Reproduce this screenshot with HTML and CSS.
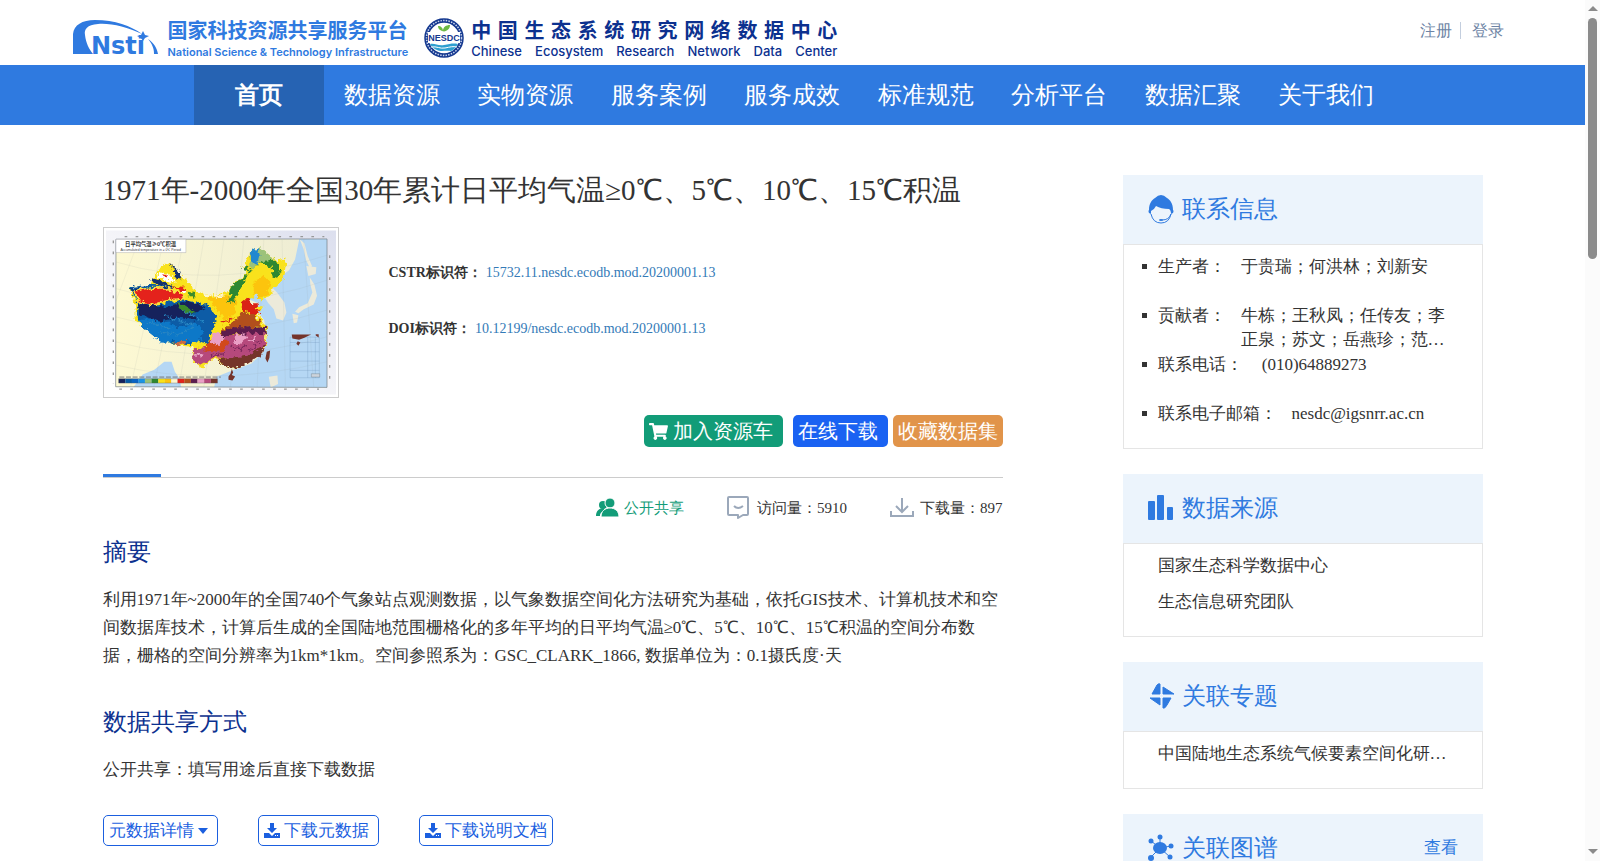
FILE: index.html
```html
<!DOCTYPE html>
<html>
<head>
    <meta charset="UTF-8">
    <meta name="viewport" content="width=device-width, initial-scale=1.0">
    <title>1971年-2000年全国30年累计日平均气温≥0℃、5℃、10℃、15℃积温</title>
    <link rel="stylesheet" href="styles.css">
</head>
<body>
    <div class="page">
        <header class="top">
            <a class="logo-nsti" href="#">
                <svg class="nsti-mark" viewBox="0 0 86 42" aria-hidden="true">
                    <path fill="#2f7ae0" d="M0 34V14C1 5 9 0 22 0c20 0 36 6 47 14-15-7-31-11-44-10C14 5 11 9 12 15c1 8 4 14 8 19z"/>
                    <path fill="#2f7ae0" d="M70 11l2 4 4 1-4 2-2 3-2-3-4-2 4-1z"/>
                    <path fill="#2f7ae0" d="M75 19c6 4 9 9 10 15h-4c0-6-2-10-6-15z"/>
                    <text x="18" y="34" class="nsti-text">Nsti</text>
                </svg>
                <span class="logo-words">
                    <b>国家科技资源共享服务平台</b>
                    <small>National Science &amp; Technology Infrastructure</small>
                </span>
            </a>
            <a class="logo-nesdc" href="#">
                <svg class="nesdc-mark" viewBox="0 0 40 40" aria-hidden="true">
                    <circle cx="20" cy="20" r="17.500" fill="#fff" stroke="#14388f" stroke-width="4.500"/>
                    <circle cx="20" cy="20" r="17.500" fill="none" stroke="#c7d2ec" stroke-width="1.500" stroke-dasharray="1.500 1.200"/>
                    <path fill="#6cb944" d="M18 13c-3-1-4-3-4-5 3 0 5 2 5 5 0-4 3-6 7-6 0 4-3 6-6 6.500z"/>
                    <path fill="#2f9fd0" d="M6 26c5-1 8 2 14 1s9-2 14-1c-2 3-4 6-7 7-5-1-10 1-14-1-3-1-6-4-7-6z"/>
                    <path fill="none" stroke="#fff" d="M7 29c6-1 9 2 14 1s8-2 12-1"/>
                    <path fill="#fff" d="M4 14h32v11H4z"/>
                    <text x="20" y="23" text-anchor="middle" class="nesdc-text">NESDC</text>
                </svg>
                <span class="logo-words spread">
                    <b>中国生态系统研究网络数据中心</b>
                    <small>Chinese Ecosystem Research Network Data Center</small>
                </span>
            </a>
            <div class="login">
                <a href="#">注册</a>
                <a href="#">登录</a>
            </div>
        </header>

        <nav class="nav">
            <ul>
                <li class="active"><a href="#">首页</a></li>
                <li><a href="#">数据资源</a></li>
                <li><a href="#">实物资源</a></li>
                <li><a href="#">服务案例</a></li>
                <li><a href="#">服务成效</a></li>
                <li><a href="#">标准规范</a></li>
                <li><a href="#">分析平台</a></li>
                <li><a href="#">数据汇聚</a></li>
                <li><a href="#">关于我们</a></li>
            </ul>
        </nav>

        <div class="container">
            <main>
                <h1>1971年-2000年全国30年累计日平均气温≥0℃、5℃、10℃、15℃积温</h1>
                <div class="summary">
                    <svg class="thumb" viewBox="16 16 691 492" role="img" aria-label="日平均气温≥0℃积温">
                        <defs>
                            <linearGradient id="paper" x1="0" x2="1" y1="1" y2="0">
                                <stop offset="0" stop-color="#fff"/>
                                <stop offset=".5" stop-color="#f4f4f8"/>
                                <stop offset="1" stop-color="#dcdfee"/>
                            </linearGradient>
                            <linearGradient id="land" x1="0" x2="1">
                                <stop offset="0" stop-color="#fdf9d3"/>
                                <stop offset="1" stop-color="#ecebd4"/>
                            </linearGradient>
                            <filter id="rough" x="-5%" y="-5%" width="110%" height="110%">
                                <feTurbulence type="fractalNoise" baseFrequency=".08" numOctaves="3" seed="4"/>
                                <feDisplacementMap in="SourceGraphic" scale="22" xChannelSelector="R" yChannelSelector="G"/>
                            </filter>
                            <clipPath id="frame"><path d="M46 42l634-1v446l-635-2z"/></clipPath>
                        </defs>
                        <path fill="url(#paper)" d="M16 16h691v492H16z"/>
                        <g clip-path="url(#frame)">
                            <path fill="url(#land)" d="M40 40h645v450H40z"/>
                            <path fill="#b5d7f4" d="M597 40h90v450H340l8-35 45-18 60-22 36-35 12-50-10-45-22-32 6-18-38-16 3-22 35-6 30-12 28-20 33-24 18-32z"/>
                            <path fill="#b5d7f4" d="M96 490l30-42 35-14 30-24h22l10 30 14 20 6 30z"/>
                            <path fill="#eceada" d="M482 201l28-19 20 20 22 30 6 30-10 24-20-6-8-28-16-18zM598 42l14 12 10 38 13 30-6 8-12-26-8-34zM618 122l30 4-2 20-22 6zM628 156l14 22 8 34-10 26-30 14-16 12-10-4 12-14 26-12 14-32-6-24zM576 266l18 4-4 22-10 2zM505 455l26-4 2 26-22 10z"/>
                            <g fill="none" stroke="#8d9a97" stroke-opacity=".3">
                                <path d="M45 230l70-187M90 485L190 43M160 485L250 43M235 485L310 43M310 485L370 43M390 485L430 43M470 485L490 43M555 485L545 43M640 485L610 43"/>
                                <path d="M45 110q300 90 635-20M45 190q300 90 635-25M45 275q300 85 635-20M45 350q300 80 635-15M45 420q300 70 635-10"/>
                            </g>
                            <g filter="url(#rough)">
                                <path fill="#f9e21a" d="M85 187l65-7 10-25 22-34 28-6 30 35 28 30 22 20 50 10 45-10 15-30 25-10 15-30h-15l25-50 25-13 25 18 30 20 30-5-10 60-25 25-25 35-20 5-10-20-30 20-10 10 60 10-20 15 8 20 22 30-3 50-27 35-30 20-40 15-35-10-15-20-20 5-25 25-30-20 5-45-40-3-60-17-40-30-35-25v-50z"/>
                                <path fill="#075ba6" d="M86 186l64-7 60 4 20 6-70-4-60 10 8 34 50 12 90-18 80 18 22 40-20 44-8 30-40-8-12 10-58-2-40-20-44-30-20-38 5-30z"/>
                                <path fill="#0d78c8" d="M108 285l60-5 60 26 60-10 20 20-12 40-40-8-70 5-50-38z"/>
                                <path fill="#15215b" d="M112 236l83 8 70-16 52 18-40 20 10 20-60-10-50 14-60-24z"/>
                                <path fill="#16306e" d="M152 160l24 4 40 20-10 6-52-20zM210 116l26 22 6 22-16-4zM90 190l30-4-20 18z"/>
                                <path fill="none" stroke="#2a86c2" stroke-width="4" d="M140 290l70 20M190 270l90 30M240 250l70 40M170 320l60 6M230 330l50-24"/>
                                <path fill="#fff" stroke="#f9e21a" stroke-width="3" d="M165 152l22-12 30 14 12 20-34-6zM238 186l28 10-18 12z"/>
                                <path fill="#e4231b" stroke="#fbe04b" stroke-width="4" d="M100 198l40-8 50-2 60 22-6 10-40 4-50 14-36-8z"/>
                                <path fill="#e4231b" d="M212 184l40 4 10 10-30-4zM188 148h10v8h-10z"/>
                                <path fill="#3c8c2c" d="M226 232l30 10 30 20-16 4-34-16zM262 200l22 4-4 14-18-6z"/>
                                <path fill="#fcc40e" d="M320 218l60-8 28 14-4 44-30 16-26-30zM460 170l30-20 20 20-10 40-22 8-18-14z"/>
                                <path fill="#fdf5cf" d="M300 202l40 8-18 10zM340 208l34 4-20 8z"/>
                                <path fill="#2f8730" d="M384 206l14-32 30-14 34-42 30-14 34 0 18 32-12 24-16-6-2-30-40-10-30 30-18 36-14 26-18 30-14-4 14-26zM424 130l18-14 6 20z"/>
                                <path fill="#9cc27a" d="M446 120l12-40 18-14 24 18 22 18-20 4-30 8-16 20z"/>
                                <path fill="#2488d0" d="M448 82l20-14 10 16-8 34-16-6z"/>
                                <path fill="#f9e21a" d="M532 112l28-10-10 30-16 4z"/>
                                <path fill="#da2118" d="M424 232l16-14 14 16 20 0-6 14 8 18-18 8-14-14-20-4zM360 292l40-16-4 8-36 14z"/>
                                <path fill="#b2501b" d="M400 290l24-32 40 10 22 34-38 4-50 10-60 30 30-34z"/>
                                <path fill="#5c1d4e" d="M398 306l50 0 48-4 4 26-40 2-52-6-52 18 8-22z"/>
                                <path fill="#b6497c" d="M388 330l60-6 50 4-6 40-50 30-60 4-40-6-46 26-22-18 8-34 40-6 20-20z"/>
                                <path fill="#d1491a" d="M322 352l40-18 22 18-18 26-34 4-24-8z"/>
                                <path fill="#eaa0c6" d="M332 324l20-6 20 22-18 20-20-6zM404 330l28-6 8 14-20 18-20-4zM444 342l24-8-10 20z"/>
                                <path fill="#e7a3c5" d="M282 384l24 0-8 14z"/>
                                <path fill="none" stroke="#7d2a5c" stroke-width="4" d="M390 366l30 8 20-14M440 380l30-20M330 392l40-6M460 344l20 6"/>
                                <path fill="#75342b" d="M352 402l40-4 50-6 30-20 22-12-12 30-40 26-42 14-34-10z"/>
                                <path fill="#c96a45" d="M224 352l36-8-10 14-20 6z"/>
                            </g>
                            <path fill="#75342b" d="M394 432l4 10-4 8 10 4-8 12-12-2 0-10 6-8zM499 380l10-4-2 22-6 14-6-12z"/>
                            <g fill="none" stroke="#5f86ad" stroke-opacity=".7">
                                <path d="M569 336h88v122h-88zM569 352h88M569 380h88M569 408h88M569 436h88M622 336v122M645 336v122"/>
                            </g>
                            <path fill="#75342b" d="M574 328h58l-20 10-16 6-20-4zM646 327h9v10l-9-6zM592 348l8 4-6 10-6-6z"/>
                            <path fill="#ccd4dc" stroke="#5b6670" d="M633 446h25v10h-25z"/>
                        </g>
                        <path fill="none" stroke="#6f7a80" stroke-width="2" d="M46 42l634-1v446l-635-2z"/>
                        <path fill="#fff" stroke="#889" d="M46 42h210v40H46z"/>
                        <text x="150" y="62" text-anchor="middle" class="map-title">日平均气温≥0℃积温</text>
                        <text x="150" y="77" text-anchor="middle" class="map-sub">Accumulated temperature in ≥ 0℃ Period</text>
                        <g fill="none" stroke="#999" stroke-width="4" stroke-dasharray="8 25">
                            <path d="M72 34h600M56 492h600M38 46v430M688 90v390"/>
                        </g>
                        <path stroke="#777" stroke-width="3" stroke-dasharray="15 5" d="M56 456h305"/>
                        <path fill="#15215b" d="M54 461h20v13H54z"/>
                        <path fill="#075ba6" d="M74 461h20v13H74z"/>
                        <path fill="#0a63c4" d="M94 461h20v13H94z"/>
                        <path fill="#1b94e4" d="M114 461h19v13h-19z"/>
                        <path fill="#9cc27a" d="M133 461h20v13h-20z"/>
                        <path fill="#2f8730" d="M153 461h20v13h-20z"/>
                        <path fill="#f9e21a" d="M173 461h20v13h-20z"/>
                        <path fill="#fcc40e" d="M193 461h19v13h-19z"/>
                        <path fill="#fdf5cf" d="M212 461h19v13h-19z"/>
                        <path fill="#e4231b" d="M231 461h20v13h-20z"/>
                        <path fill="#b2501b" d="M251 461h20v13h-20z"/>
                        <path fill="#5c1d4e" d="M271 461h20v13h-20z"/>
                        <path fill="#eaa0c6" d="M291 461h20v13h-20z"/>
                        <path fill="#b6497c" d="M311 461h20v13h-20z"/>
                        <path fill="#75342b" d="M331 461h20v13h-20z"/>
                        <path fill="none" stroke="#555" d="M54 461h297v13H54z"/>
                    </svg>
                    <dl class="ids">
                        <div><dt>CSTR标识符：</dt><dd><a href="#">15732.11.nesdc.ecodb.mod.20200001.13</a></dd></div>
                        <div><dt>DOI标识符：</dt><dd><a href="#">10.12199/nesdc.ecodb.mod.20200001.13</a></dd></div>
                    </dl>
                </div>

                <div class="actions">
                    <button class="btn cart" type="button">
                        <svg viewBox="0 0 576 512" aria-hidden="true"><path fill="currentColor" d="M528 301l47-208c4-15-8-29-23-29H159l-9-45C148 8 138 0 127 0H24C11 0 0 11 0 24v16c0 13 11 24 24 24h70l70 343c-17 10-28 28-28 49 0 31 25 56 56 56s56-25 56-56c0-16-6-30-17-40h210c-11 10-17 24-17 40 0 31 25 56 56 56s56-25 56-56c0-22-13-41-32-50l6-25c3-15-8-29-24-29H218l-6-32h293c11 0 21-8 23-19z"/></svg>
                        加入资源车
                    </button>
                    <button class="btn online" type="button">在线下载</button>
                    <button class="btn collect" type="button">收藏数据集</button>
                </div>

                <div class="stats">
                    <span class="share">
                        <svg viewBox="0 0 24 20" width="24" height="20" aria-hidden="true">
                            <g fill="currentColor">
                                <circle cx="7" cy="7" r="4"/>
                                <path d="M0 18c0-5 3-8 8-8 1 2 0 3-2 4-2 1-2 3-2 4z"/>
                                <circle cx="14" cy="5" r="5" stroke="#fff"/>
                                <path d="M5 19c0-6 4-9 9-9s9 3 9 9z" stroke="#fff"/>
                            </g>
                        </svg>
                        公开共享
                    </span>
                    <span>
                        <svg viewBox="0 0 24 24" width="24" height="24" aria-hidden="true">
                            <path fill="none" stroke="#9ba8ba" stroke-width="2" stroke-linejoin="round" d="M2 1h18q1 0 1 1v16q0 1-1 1h-4l-5 3v-3H2q-1 0-1-1V2q0-1 1-1zM7 10q4 4 9 0"/>
                        </svg>
                        访问量：5910
                    </span>
                    <span>
                        <svg viewBox="0 0 24 20" width="24" height="20" aria-hidden="true">
                            <path fill="none" stroke="#9ba8ba" stroke-width="2" d="M12 0v13M6 8l6 6 6-6M1 13v5h22v-5"/>
                        </svg>
                        下载量：897
                    </span>
                </div>

                <h2>摘要</h2>
                <p>利用1971年~2000年的全国740个气象站点观测数据，以气象数据空间化方法研究为基础，依托GIS技术、计算机技术和空间数据库技术，计算后生成的全国陆地范围栅格化的多年平均的日平均气温≥0℃、5℃、10℃、15℃积温的空间分布数据，栅格的空间分辨率为1km*1km。空间参照系为：GSC_CLARK_1866, 数据单位为：0.1摄氏度·天</p>
                <h2>数据共享方式</h2>
                <p>公开共享：填写用途后直接下载数据</p>

                <div class="links">
                    <button type="button">元数据详情
                        <svg viewBox="0 0 10 16" width="10" height="16" aria-hidden="true"><path fill="currentColor" d="M0 5h10l-5 6z"/></svg>
                    </button>
                    <button type="button" class="wide">
                        <svg viewBox="0 0 16 16" width="16" height="16" aria-hidden="true"><path fill="currentColor" fill-rule="evenodd" d="M6 0h4v5h3l-5 5-5-5h3zM0 10h5l3 3 3-3h5v5H0zM11 12v1h1v-1zM13 12v1h1v-1z"/></svg>
                        下载元数据
                    </button>
                    <button type="button">
                        <svg viewBox="0 0 16 16" width="16" height="16" aria-hidden="true"><path fill="currentColor" fill-rule="evenodd" d="M6 0h4v5h3l-5 5-5-5h3zM0 10h5l3 3 3-3h5v5H0zM11 12v1h1v-1zM13 12v1h1v-1z"/></svg>
                        下载说明文档
                    </button>
                </div>
            </main>

            <aside>
                <section class="card">
                    <h3>
                        <svg viewBox="0 0 26 30" width="26" height="30" aria-hidden="true">
                            <path fill="#2f7ae0" d="M1 19q-1-2 0-3C1 9 4 6 7 4q6-6 12 0c3 2 6 5 6 12q1 1 0 3l-2 1q0-4-2-5-8 0-13-3-2 4-5 5v3z"/>
                            <path fill="none" stroke="#2f7ae0" d="M3 20q2 9 10 9t10-9q-2 6-9 6"/>
                            <ellipse cx="13" cy="26" rx="2" ry="1" fill="#2f7ae0"/>
                        </svg>
                        联系信息
                    </h3>
                    <ul class="contact">
                        <li><span>生产者：</span><span>于贵瑞；何洪林；刘新安</span></li>
                        <li><span>贡献者：</span><span>牛栋；王秋凤；任传友；李正泉；苏文；岳燕珍；范…</span></li>
                        <li><span>联系电话：</span><span>&nbsp;(010)64889273</span></li>
                        <li><span>联系电子邮箱：</span><span>nesdc@igsnrr.ac.cn</span></li>
                    </ul>
                </section>

                <section class="card">
                    <h3>
                        <svg viewBox="0 0 26 30" width="26" height="30" aria-hidden="true">
                            <g fill="#2f7ae0">
                                <rect x="0" y="8" width="7" height="19" rx="1"/>
                                <rect x="9" y="2" width="7" height="25" rx="1"/>
                                <rect x="19" y="14" width="6" height="13" rx="1"/>
                            </g>
                        </svg>
                        数据来源
                    </h3>
                    <ul class="plain">
                        <li>国家生态科学数据中心</li>
                        <li>生态信息研究团队</li>
                    </ul>
                </section>

                <section class="card">
                    <h3>
                        <svg viewBox="0 0 26 30" width="26" height="30" aria-hidden="true">
                            <path fill="#2f7ae0" stroke="#2f7ae0" stroke-linejoin="round" d="M9 4q2-2 3-1v10H4zM15 6l11 7H15zM2 17h10v7zM15 17h8l-4 7q-2 4-4 3z"/>
                        </svg>
                        关联专题
                    </h3>
                    <ul class="plain">
                        <li>中国陆地生态系统气候要素空间化研…</li>
                    </ul>
                </section>

                <section class="card">
                    <h3>
                        <svg viewBox="0 0 26 30" width="26" height="30" aria-hidden="true">
                            <path fill="none" stroke="#2f7ae0" d="M12 15V4M12 15L3 8M12 15l11-2M12 15l-9 9M12 15l10 9"/>
                            <g fill="#2f7ae0">
                                <ellipse cx="12" cy="15" rx="7" ry="6"/>
                                <circle cx="12" cy="4" r="2.500"/>
                                <circle cx="3" cy="8" r="2.500"/>
                                <circle cx="23" cy="13" r="2.500"/>
                                <circle cx="3" cy="25" r="3"/>
                                <circle cx="22" cy="24" r="2.500"/>
                            </g>
                        </svg>
                        关联图谱
                        <a href="#">查看</a>
                    </h3>
                </section>
            </aside>
        </div>
    </div>

    <div class="scrollbar" aria-hidden="true">
        <i class="up"></i>
        <i class="thumb-bar"></i>
        <i class="down"></i>
    </div>
</body>
</html>
```
FILE: styles.css
```css
*{
    box-sizing: border-box;
    padding: 0;
    margin: 0;
}

body{
    display: flex;
    height: 100vh;
    overflow: hidden;
    background: #fff;
    color: #333;
    font-family: "Liberation Serif", serif;
    font-size: 17px;
    line-height: 24px;
}

a{
    color: inherit;
    text-decoration: none;
}

ul{
    list-style: none;
}

button{
    font-family: inherit;
    white-space: nowrap;
    cursor: pointer;
}

svg{
    flex: none;
}

.page{
    flex: 1;
    min-width: 0;
}

/* header */
.top{
    display: flex;
    align-items: flex-start;
    max-width: 1440px;
    height: 65px;
    margin: 0 auto;
}

.logo-nsti,
.logo-nesdc{
    display: flex;
    align-items: flex-start;
}

.logo-nsti{
    color: #2f7ae0;
}

.logo-nesdc{
    color: #0c318f;
    margin-left: 16px;
}

.nsti-mark{
    width: 86px;
    height: 42px;
    margin-top: 20px;
}

.nsti-text{
    font: bold 24px "DejaVu Sans", sans-serif;
    fill: #2f7ae0;
}

.nesdc-mark{
    width: 40px;
    height: 40px;
    margin-top: 18px;
}

.nesdc-text{
    font: bold 9px "Liberation Sans", sans-serif;
    fill: #14388f;
}

.logo-words{
    display: flex;
    flex-direction: column;
    margin: 17px 0 0 9px;
    white-space: nowrap;
}

.logo-words b{
    font: bold 20px/25px "Noto Sans CJK SC", sans-serif;
}

.logo-words small{
    font: 600 11px/20px Inter, sans-serif;
}

.spread{
    width: 366px;
    margin-left: 7px;
    text-align-last: justify;
}

.spread small{
    font-size: 13px;
    font-weight: 500;
    line-height: 18px;
}

.login{
    display: flex;
    margin: 22px 9px 0 auto;
    font-size: 16px;
    line-height: 17px;
    color: #6d84a5;
}

.login a + a{
    margin-left: 8px;
    padding-left: 11px;
    border-left: 1px solid #c3cede;
}

/* nav */
.nav{
    background: #2f7ae0;
}

.nav ul{
    display: flex;
    max-width: 1198px;
    margin: 0 auto;
}

.nav li{
    flex: 1;
}

.nav .active{
    flex: 0 0 130px;
    background: #2663b3;
    font-weight: bold;
}

.nav a{
    display: block;
    color: #fff;
    font-size: 24px;
    line-height: 60px;
    text-align: center;
}

.nav li + li a{
    padding-left: 3px;
}

/* content */
.container{
    display: flex;
    gap: 120px;
    max-width: 1380px;
    margin: 0 auto;
    padding-top: 50px;
}

main{
    flex: 1;
    min-width: 0;
}

h1{
    font-size: 29px;
    font-weight: normal;
    line-height: 30px;
}

.summary{
    display: flex;
    gap: 50px;
    margin-top: 22px;
}

.thumb{
    width: 236px;
    height: 171px;
    padding: 2px;
    border: 1px solid #ccc;
}

.map-title{
    font: bold 16px "Noto Sans CJK SC", sans-serif;
    fill: #333;
}

.map-sub{
    font: 10px "Liberation Sans", sans-serif;
    fill: #444;
}

.ids{
    padding-top: 34px;
    font-size: 14px;
}

.ids div{
    display: flex;
    gap: 4px;
    margin-bottom: 32px;
}

.ids dt{
    font-weight: bold;
}

.ids a{
    color: #337ab7;
}

.actions{
    display: flex;
    justify-content: flex-end;
    gap: 5px;
    margin-top: 17px;
    padding-bottom: 30px;
    border-bottom: 1px solid #ccc;
}

.actions::before{
    content: "";
    align-self: flex-end;
    width: 58px;
    height: 3px;
    margin: 0 auto -30px 0;
    background: #2f7ae0;
}

.btn{
    display: flex;
    align-items: center;
    gap: 5px;
    height: 32px;
    padding: 0 5px;
    border: 0;
    border-radius: 5px;
    color: #fff;
    font-size: 20px;
}

.btn svg{
    width: 19px;
    height: 17px;
}

.cart{
    padding-right: 10px;
    margin-right: 5px;
    background: #129c78;
}

.online{
    padding-right: 10px;
    background: #1a62f2;
}

.collect{
    background: #e1944a;
}

.stats{
    display: flex;
    justify-content: flex-end;
    gap: 43px;
    margin-top: 18px;
    font-size: 15px;
}

.stats span{
    display: flex;
    align-items: center;
    gap: 6px;
}

.share{
    color: #129c78;
}

.stats .share{
    gap: 4px;
}

h2{
    margin-top: 16px;
    color: #0c318f;
    font-size: 24px;
    font-weight: normal;
    line-height: 32px;
}

p{
    margin: 18px 0 36px;
    line-height: 28px;
}

p + h2{
    margin-top: 0;
}

.links{
    display: flex;
    gap: 40px;
    margin-top: -5px;
}

.links button{
    display: flex;
    align-items: center;
    gap: 4px;
    height: 31px;
    padding: 0 5px;
    border: 1px solid #1b5fdf;
    border-radius: 5px;
    background: #fff;
    color: #1b5fdf;
    font-size: 17px;
}

.links button:first-child,
.links .wide{
    padding-right: 9px;
}

/* sidebar */
aside{
    flex: 0 0 360px;
}

.card{
    margin-bottom: 25px;
}

.card h3{
    display: flex;
    align-items: center;
    gap: 8px;
    height: 69px;
    padding: 0 25px 2px;
    background: #ecf4fc;
    color: #2f7ae0;
    font-size: 24px;
    font-weight: normal;
}

.card h3 a{
    margin-left: auto;
    font-size: 17px;
}

.contact,
.plain{
    border: 1px solid #e5e5e5;
}

.contact{
    display: grid;
    gap: 1px;
    padding: 10px 34px 0 18px;
}

.contact li{
    display: flex;
    min-height: 48px;
}

.contact li:last-child{
    min-height: 46px;
}

.contact li::before{
    content: "";
    flex: none;
    width: 5px;
    height: 5px;
    margin: 9px 11px 0 0;
    background: #333;
}

.contact span:first-of-type{
    flex: none;
    margin-right: 15px;
}

.plain{
    padding: 4px 34px 16px;
    line-height: 36px;
}

/* scrollbar */
.scrollbar{
    display: flex;
    flex: 0 0 15px;
    flex-direction: column;
    align-items: center;
    padding: 6px 0 7px;
    background: #fbfbfb;
}

.up,
.down{
    border: 5px solid transparent;
}

.up{
    border-top: 0;
    border-bottom-color: #8b8b8b;
}

.down{
    margin-top: auto;
    border-bottom: 0;
    border-top-color: #8b8b8b;
}

.thumb-bar{
    width: 9px;
    height: 241px;
    margin-top: 7px;
    border-radius: 5px;
    background: #8b8b8b;
}
```
